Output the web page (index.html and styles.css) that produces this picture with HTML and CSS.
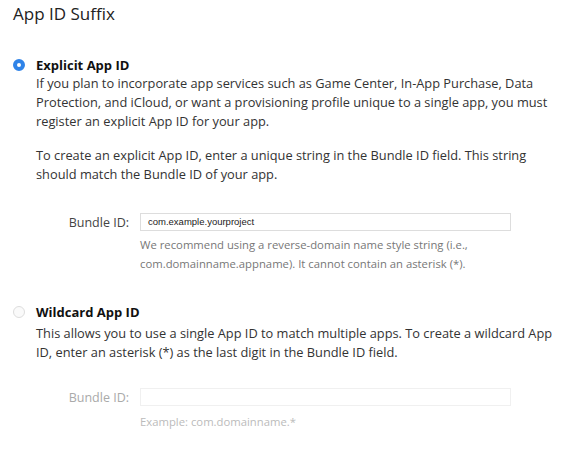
FILE: index.html
```html
<!DOCTYPE html>
<html>
<head>
<meta charset="utf-8">
<link rel="stylesheet" href="styles.css">
</head>
<body>
<div class="page">
  <h2 class="title">App ID Suffix</h2>

  <section class="option">
    <div class="option-head">
      <span class="radio radio-on"></span>
      <span class="option-label">Explicit App ID</span>
    </div>
    <div class="option-body">
      <p class="para">If you plan to incorporate app services such as Game Center, In-App Purchase, Data Protection, and iCloud, or want a provisioning profile unique to a single app, you must register an explicit App ID for your app.</p>
      <p class="para para-gap">To create an explicit App ID, enter a unique string in the Bundle ID field. This string should match the Bundle ID of your app.</p>
      <div class="field">
        <span class="field-label">Bundle ID:</span>
        <div class="field-input">com.example.yourproject</div>
      </div>
      <p class="help">We recommend using a reverse-domain name style string (i.e.,<br>com.domainname.appname). It cannot contain an asterisk (*).</p>
    </div>
  </section>

  <section class="option option-second">
    <div class="option-head">
      <span class="radio"></span>
      <span class="option-label">Wildcard App ID</span>
    </div>
    <div class="option-body">
      <p class="para">This allows you to use a single App ID to match multiple apps. To create a wildcard App ID, enter an asterisk (*) as the last digit in the Bundle ID field.</p>
      <div class="field field-disabled">
        <span class="field-label">Bundle ID:</span>
        <div class="field-input"></div>
      </div>
      <p class="help help-disabled">Example: com.domainname.*</p>
    </div>
  </section>
</div>
</body>
</html>
```

FILE: styles.css
```css
* { box-sizing: border-box; }
html, body { margin: 0; padding: 0; background: #fff; }
body {
  font-family: "Open Sans", "DejaVu Sans", sans-serif;
  color: #333;
}
.page { padding: 3px 0 0 13px; width: 568px; }
.title {
  margin: 0;
  font-size: 17px;
  font-weight: 400;
  color: #222;
  line-height: 22px;
}
.option { margin-top: 31px; }
.option-second { margin-top: 30px; }
.option-head {
  display: flex;
  align-items: center;
  height: 18px;
}
.radio {
  width: 12px;
  height: 12px;
  border-radius: 50%;
  border: 1px solid #ddd;
  background: #fafafa;
  margin-right: 11px;
  flex: none;
}
.radio-on {
  border: 4px solid #2f83e8;
  background: #fff;
}
.option-label {
  font-weight: 700;
  font-size: 13px;
  color: #111;
}
.option-body { padding-left: 23px; }
.option-second .option-body { padding-top: 3px; }
.para {
  margin: 0;
  font-size: 12.8px;
  line-height: 19px;
  color: #333;
  width: 525px;
}
.para-gap { margin-top: 15px; }
.field {
  display: flex;
  align-items: center;
  margin-top: 29px;
}
.field-label {
  width: 104px;
  text-align: right;
  padding-right: 11px;
  font-size: 12.5px;
  color: #444;
}
.field-input {
  width: 371px;
  height: 18px;
  border: 1px solid #ddd;
  font-family: "Liberation Sans", Arial, sans-serif;
  font-size: 9.5px;
  line-height: 16px;
  padding-left: 7px;
  color: #222;
}
.help {
  margin: 4px 0 0 104px;
  font-size: 11.3px;
  line-height: 19px;
  color: #777;
}
.field-disabled { margin-top: 26px; }
.field-disabled .field-label { color: #aaa; }
.field-disabled .field-input { border-color: #f0f0f0; }
.help-disabled { color: #bbb; margin-top: 6px; }
```
